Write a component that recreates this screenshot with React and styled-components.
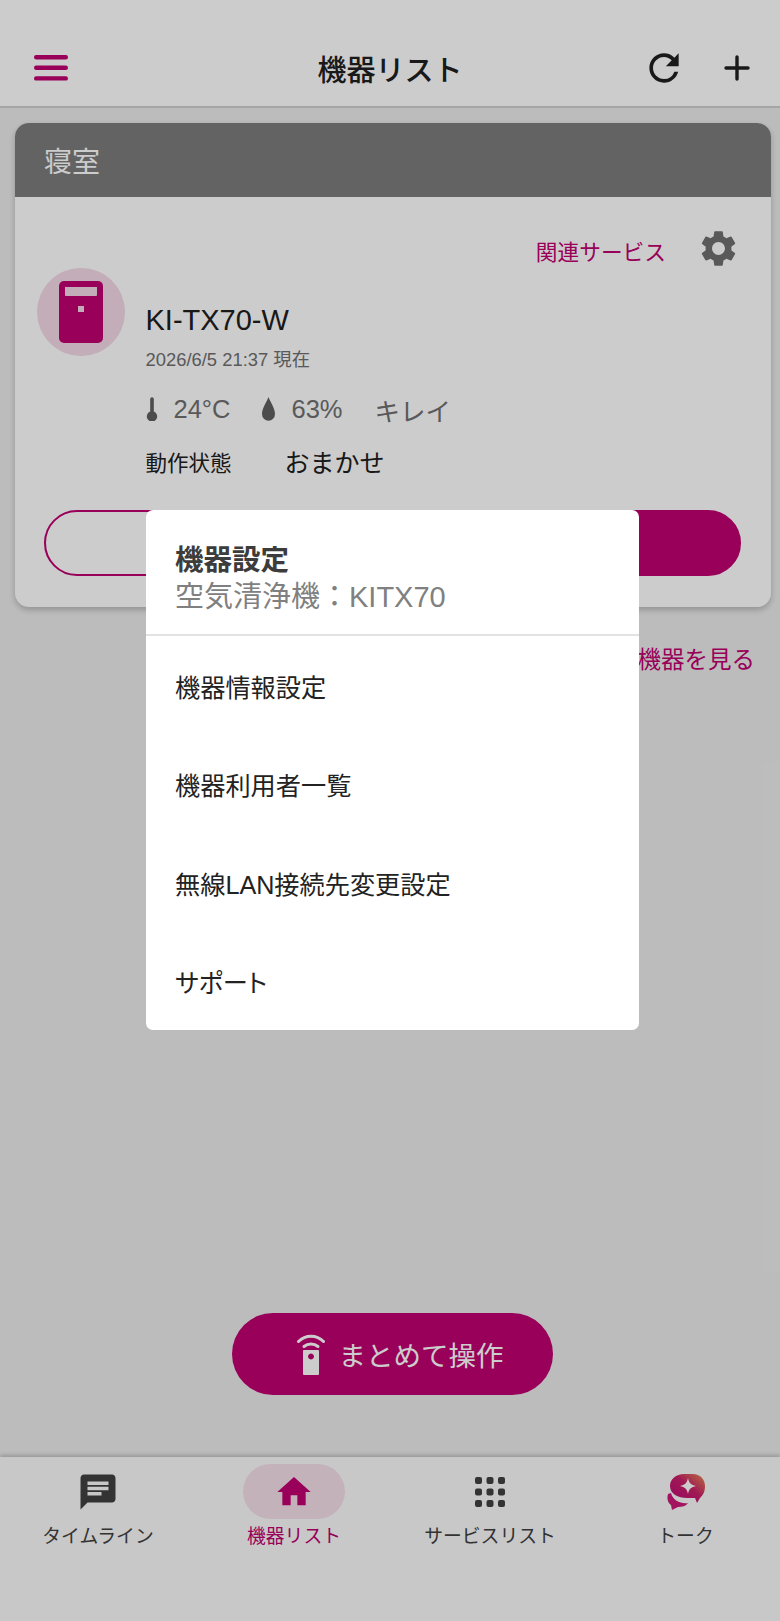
import React from 'react';
import styled, { createGlobalStyle } from 'styled-components';
import { MdRefresh, MdSettings, MdHome, MdChat } from 'react-icons/md';

const magenta = '#bf0070';

const GlobalStyle = createGlobalStyle`
  html, body { margin: 0; padding: 0; }
  body {
    font-family: "Liberation Sans", "Noto Sans CJK JP", sans-serif;
    background: #ececec;
  }
`;

const Page = styled.div`
  position: relative;
  width: 780px;
  height: 1621px;
  overflow: hidden;
  display: flex;
  flex-direction: column;
  background: #ececec;
`;

const Header = styled.header`
  box-sizing: border-box;
  height: 108px;
  flex: none;
  padding: 29px 30px 0 34px;
  display: grid;
  grid-template-columns: 1fr auto 1fr;
  align-items: center;
  background: #fff;
  border-bottom: 2px solid #cfcfcf;
`;

const Title = styled.h1`
  margin: 0 0 0 -4px;
  font-size: 29px;
  font-weight: 500;
  color: #202020;
`;

const HeaderActions = styled.div`
  justify-self: end;
  display: flex;
  align-items: center;
  gap: 38px;
  color: #202020;
`;

const Main = styled.main`
  position: relative;
  flex: 1;
  padding: 15px 9px 0 15px;
`;

const Card = styled.section`
  border-radius: 14px;
  overflow: hidden;
  background: #fff;
  box-shadow: 0 3px 6px rgba(0, 0, 0, 0.22);
`;

const RoomTitle = styled.div`
  box-sizing: border-box;
  height: 74px;
  padding-left: 29px;
  display: flex;
  align-items: center;
  font-size: 28px;
  color: #fff;
  background: #7c7c7c;
`;

const CardBody = styled.div`
  padding: 33px 30px 31px 22px;
`;

const ServiceRow = styled.div`
  height: 36px;
  display: flex;
  justify-content: flex-end;
  align-items: center;
  gap: 31px;
  padding-right: 1px;
  color: #707070;
`;

const ServiceLink = styled.span`
  margin-top: 4px;
  font-size: 21.7px;
  color: ${magenta};
`;

const DeviceRow = styled.div`
  margin-top: 2px;
  display: flex;
  gap: 20.5px;
`;

const Avatar = styled.div`
  width: 88px;
  height: 88px;
  flex: none;
  border-radius: 50%;
  display: flex;
  align-items: center;
  justify-content: center;
  background: #f4d9e7;
`;

const Info = styled.div`
  padding-top: 35px;
`;

const DeviceName = styled.div`
  height: 34px;
  line-height: 34px;
  font-size: 29px;
  color: #202020;
`;

const Timestamp = styled.div`
  margin-top: 11px;
  height: 24px;
  line-height: 24px;
  font-size: 18.4px;
  color: #707070;
`;

const Stats = styled.div`
  margin-top: 22px;
  height: 30px;
  display: flex;
  align-items: center;
  font-size: 25.5px;
  color: #707070;
`;

const Stat = styled.span`
  display: flex;
  align-items: center;
  gap: 16px;
  margin-right: ${p => p.$gap}px;
`;

const StatusRow = styled.div`
  margin-top: 22px;
  height: 30px;
  display: flex;
  align-items: center;
  gap: 53px;
  color: #202020;
`;

const StatusLabel = styled.span`
  font-size: 21.5px;
`;

const StatusValue = styled.span`
  font-size: 25px;
`;

const Buttons = styled.div`
  margin: 34px 0 0 7px;
  display: grid;
  grid-template-columns: 1fr 1fr;
  gap: 12px;
`;

const PillButton = styled.div`
  box-sizing: border-box;
  height: 66px;
  border-radius: 33px;
  border: 2px solid ${magenta};
  background: ${p => (p.$filled ? magenta : 'transparent')};
`;

const MoreLink = styled.div`
  margin-top: 38px;
  padding-right: 16px;
  height: 30px;
  line-height: 30px;
  text-align: right;
  font-size: 23.5px;
  color: ${magenta};
`;

const Fab = styled.div`
  position: absolute;
  left: 232px;
  bottom: 62px;
  box-sizing: border-box;
  width: 321px;
  height: 82px;
  padding-left: 15px;
  border-radius: 41px;
  display: flex;
  align-items: center;
  justify-content: center;
  gap: 14px;
  font-size: 27.5px;
  color: #fff;
  background: ${magenta};
`;

const BottomNav = styled.nav`
  box-sizing: border-box;
  height: 164px;
  flex: none;
  padding: 7px 0 0 3px;
  display: grid;
  grid-template-columns: 190px 190px 190px 1fr;
  column-gap: 6px;
  align-items: start;
  background: #fbfbfb;
  box-shadow: 0 -2px 4px rgba(0, 0, 0, 0.2);
`;

const Tab = styled.div`
  display: flex;
  flex-direction: column;
  align-items: center;
  font-size: 18.8px;
  color: ${p => (p.$active ? magenta : '#404040')};
`;

const TabIcon = styled.div`
  width: 102px;
  height: 55px;
  border-radius: 28px;
  display: flex;
  align-items: center;
  justify-content: center;
  background: ${p => (p.$active ? '#f6dfea' : 'transparent')};
`;

const TabLabel = styled.div`
  margin-top: 4px;
  height: 28px;
  line-height: 28px;
  white-space: nowrap;
`;

const Overlay = styled.div`
  position: absolute;
  inset: 0;
  box-sizing: border-box;
  padding: 510px 141px 0 146px;
  background: rgba(0, 0, 0, 0.2);
`;

const Dialog = styled.div`
  border-radius: 7px;
  background: #fff;
  overflow: hidden;
`;

const DialogHead = styled.div`
  box-sizing: border-box;
  height: 126px;
  padding: 33px 30px 0 29px;
  border-bottom: 2px solid #e2e2e2;
`;

const DialogTitle = styled.div`
  height: 34px;
  line-height: 34px;
  font-size: 28.5px;
  font-weight: 700;
  color: #3c3c3c;
`;

const DialogSub = styled.div`
  margin-top: 3px;
  height: 34px;
  line-height: 34px;
  font-size: 29px;
  color: #808080;
`;

const MenuList = styled.div`
  padding-top: 1px;
`;

const MenuItem = styled.div`
  box-sizing: border-box;
  height: 98.3px;
  padding-left: 29px;
  display: flex;
  align-items: center;
  font-size: 25.2px;
  font-feature-settings: "palt";
  color: #222;
`;

const MenuIcon = () => (
  <svg width="34" height="26" viewBox="0 0 34 26" fill={magenta}>
    <rect x="0" y="0" width="34" height="4.4" rx="2.2" />
    <rect x="0" y="10.6" width="34" height="4.4" rx="2.2" />
    <rect x="0" y="21.2" width="34" height="4.4" rx="2.2" />
  </svg>
);

const PlusIcon = () => (
  <svg width="26" height="26" viewBox="0 0 26 26" stroke="#202020" strokeWidth="3.4" strokeLinecap="round">
    <path d="M13 2v22M2 13h22" />
  </svg>
);

const PurifierIcon = () => (
  <svg width="44" height="62" viewBox="0 0 44 62" fill={magenta}>
    <path d="M5 0h34a5 5 0 0 1 5 5v1H0V5a5 5 0 0 1 5-5z" />
    <path fillRule="evenodd" d="M0 6h6v8a1 1 0 0 0 1 1h30a1 1 0 0 0 1-1V6h6v51a5 5 0 0 1-5 5H5a5 5 0 0 1-5-5zM19 25v6h6v-6z" />
  </svg>
);

const ThermoIcon = () => (
  <svg width="12" height="24" viewBox="0 0 12 24" fill="#606060">
    <path d="M4.200 2a1.800 1.800 0 0 1 3.600 0v12.500a5.200 5.200 0 1 1-3.600 0z" />
  </svg>
);

const DropIcon = () => (
  <svg width="13" height="24" viewBox="0 0 13 24" fill="#606060">
    <path d="M6.500 0C8 4.500 13 11 13 17a6.500 6.800 0 0 1-13 0C0 11 5 4.500 6.500 0z" />
  </svg>
);

const RemoteIcon = () => (
  <svg width="28" height="42" viewBox="0 0 28 42">
    <path d="M1.500 8.500C8.500 1.500 19.500 1.500 26.500 8.500" fill="none" stroke="#fff" strokeWidth="3" strokeLinecap="round" />
    <path d="M7 13.500C11 10 17 10 21 13.500" fill="none" stroke="#fff" strokeWidth="3" strokeLinecap="round" />
    <path fillRule="evenodd" fill="#fff" d="M7 17h14a1 1 0 0 1 1 1v23a1 1 0 0 1-1 1H7a1 1 0 0 1-1-1V18a1 1 0 0 1 1-1zM14 20.500a3 3 0 1 0 .01 0z" />
  </svg>
);

const AppsIcon = () => (
  <svg width="30" height="30" viewBox="0 0 30 30" fill="#404040">
    {[0, 11.5, 23].map(y =>
      [0, 11.5, 23].map(x => <rect key={`${x}-${y}`} x={x} y={y} width="7" height="7" rx="2" />)
    )}
  </svg>
);

const TalkIcon = () => (
  <svg width="38" height="36" viewBox="0 0 38 36">
    <defs>
      <linearGradient id="talkGrad" x1="0" y1="1" x2="1" y2="0">
        <stop offset="0" stopColor="#bb0a78" />
        <stop offset="0.55" stopColor="#c81f6a" />
        <stop offset="1" stopColor="#e88a50" />
      </linearGradient>
    </defs>
    <path fill="#cc1878" d="M1 20c-1.500 5 0 9 3 11l1 5 6-3c4 0 8-1 10-4-7 1-15-2-17-10z" />
    <path fill="url(#talkGrad)" d="M17 0h9c7 0 12 5 12 12 0 6-2 9-5 12l-3 5-2-5H20C11 24 3 20 3 12 3 5 9 0 17 0z" />
    <path fill="#fff" d="M21 4c1 5 3 7 8 8-5 1-7 3-8 8-1-5-3-7-8-8 5-1 7-3 8-8z" />
  </svg>
);

const menuItems = ['機器情報設定', '機器利用者一覧', '無線LAN接続先変更設定', 'サポート'];

export default function App() {
  return (
    <Page>
      <GlobalStyle />
      <Header>
        <MenuIcon />
        <Title>機器リスト</Title>
        <HeaderActions>
          <MdRefresh size={44} />
          <PlusIcon />
        </HeaderActions>
      </Header>

      <Main>
        <Card>
          <RoomTitle>寝室</RoomTitle>
          <CardBody>
            <ServiceRow>
              <ServiceLink>関連サービス</ServiceLink>
              <MdSettings size={43} />
            </ServiceRow>
            <DeviceRow>
              <Avatar>
                <PurifierIcon />
              </Avatar>
              <Info>
                <DeviceName>KI-TX70-W</DeviceName>
                <Timestamp>2026/6/5 21:37 現在</Timestamp>
                <Stats>
                  <Stat $gap={32}><ThermoIcon />24°C</Stat>
                  <Stat $gap={32}><DropIcon />63%</Stat>
                  <span>キレイ</span>
                </Stats>
                <StatusRow>
                  <StatusLabel>動作状態</StatusLabel>
                  <StatusValue>おまかせ</StatusValue>
                </StatusRow>
              </Info>
            </DeviceRow>
            <Buttons>
              <PillButton />
              <PillButton $filled />
            </Buttons>
          </CardBody>
        </Card>
        <MoreLink>すべての機器を見る</MoreLink>
        <Fab>
          <RemoteIcon />
          まとめて操作
        </Fab>
      </Main>

      <BottomNav>
        <Tab>
          <TabIcon><MdChat size={42} /></TabIcon>
          <TabLabel>タイムライン</TabLabel>
        </Tab>
        <Tab $active>
          <TabIcon $active><MdHome size={40} /></TabIcon>
          <TabLabel>機器リスト</TabLabel>
        </Tab>
        <Tab>
          <TabIcon><AppsIcon /></TabIcon>
          <TabLabel>サービスリスト</TabLabel>
        </Tab>
        <Tab>
          <TabIcon><TalkIcon /></TabIcon>
          <TabLabel>トーク</TabLabel>
        </Tab>
      </BottomNav>

      <Overlay>
        <Dialog>
          <DialogHead>
            <DialogTitle>機器設定</DialogTitle>
            <DialogSub>空気清浄機：KITX70</DialogSub>
          </DialogHead>
          <MenuList>
            {menuItems.map(item => (
              <MenuItem key={item}>{item}</MenuItem>
            ))}
          </MenuList>
        </Dialog>
      </Overlay>
    </Page>
  );
}
